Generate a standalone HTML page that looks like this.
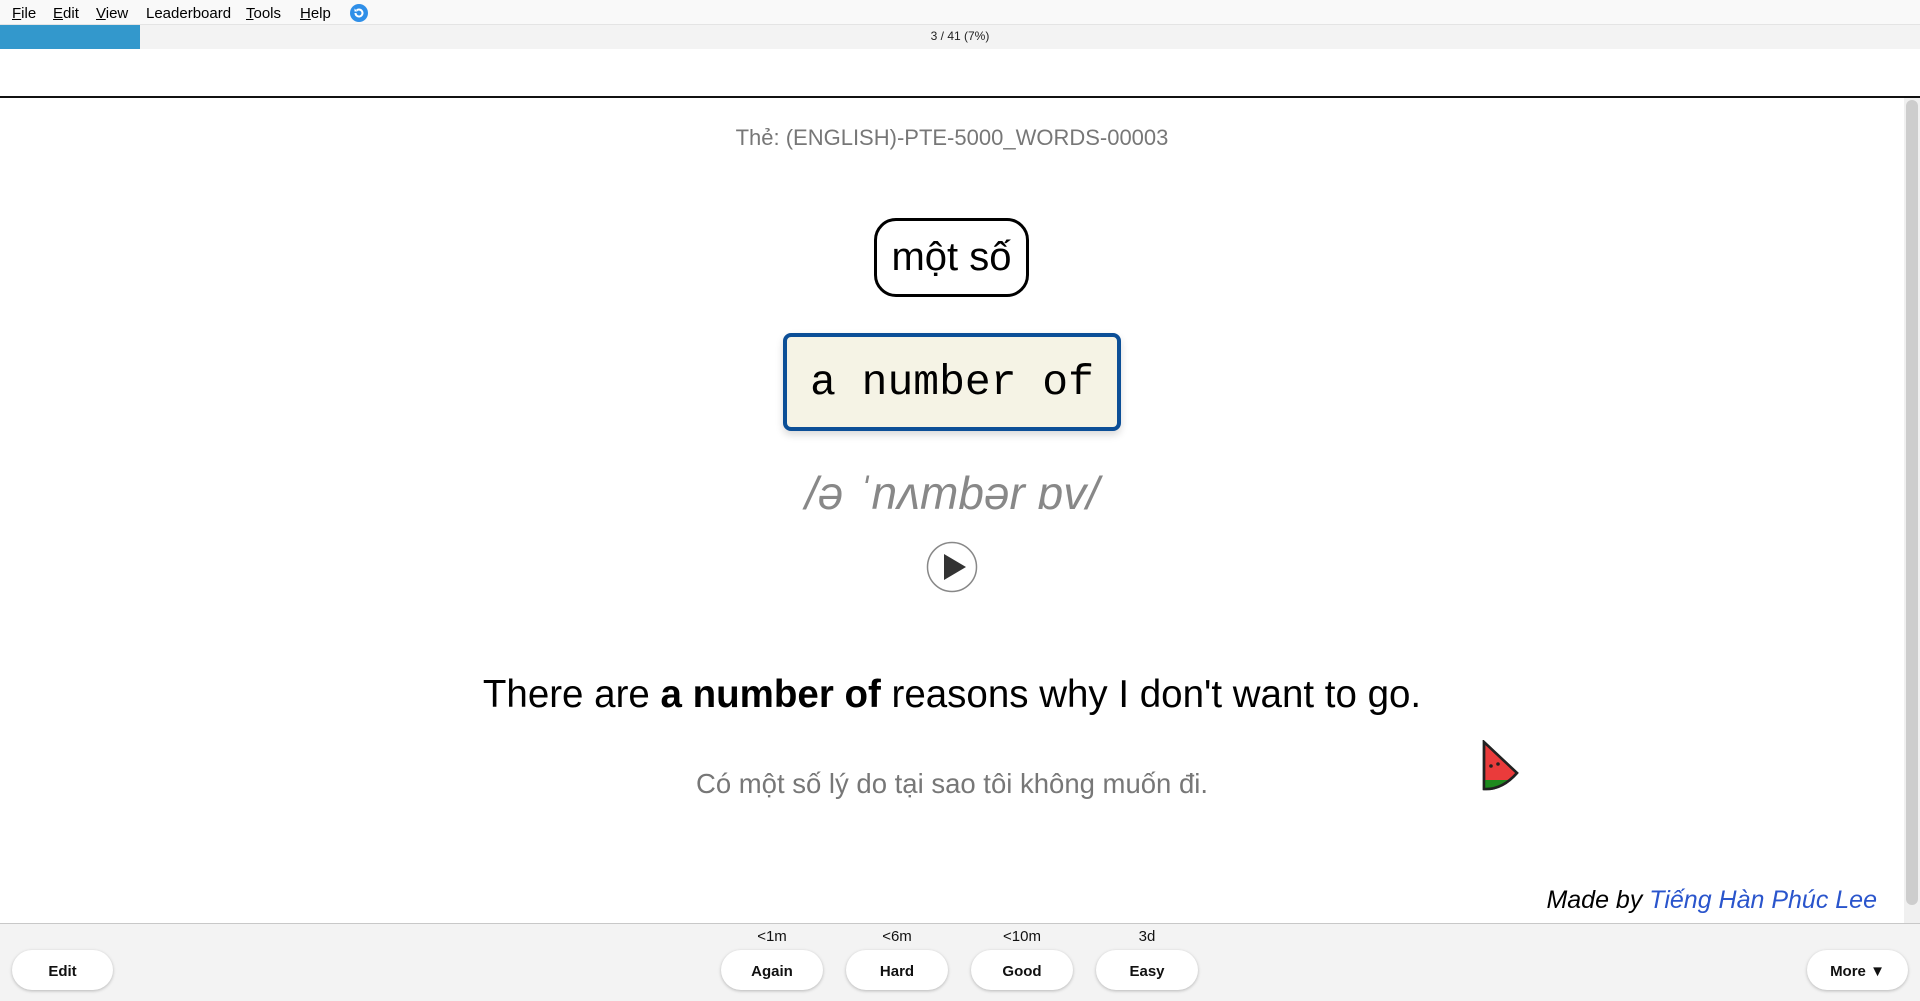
<!DOCTYPE html>
<html><head><meta charset="utf-8"><style>
*{margin:0;padding:0;box-sizing:border-box}
body{width:1920px;height:1001px;overflow:hidden;background:#fff;font-family:"Liberation Sans",Arial,sans-serif;position:relative}
.menu{position:absolute;top:0;left:0;width:1920px;height:24px;background:#f9f9f9;font-size:15px;color:#000}
.menu span{position:absolute;top:5px}
.menu u{text-decoration:underline}
.prog{position:absolute;top:24px;left:0;width:1920px;height:25px;background:#f3f3f3;border-top:1px solid #e4e4e4}
.prog .bar{position:absolute;left:0;top:0;width:140px;height:24px;background:#3398cc}
.prog .t{position:absolute;left:0;width:1920px;text-align:center;top:4px;font-size:12px;color:#222}
.line{position:absolute;top:96px;left:0;width:1920px;height:2px;background:#111}
.scroll{position:absolute;top:98px;left:1904px;width:16px;height:826px;background:#f0f0f0}
.scroll div{position:absolute;left:2px;top:2px;width:12px;height:805px;background:#cdcdcd;border-radius:6px}
.c{position:absolute;left:0;width:1904px;text-align:center}
.box1{position:absolute;left:874px;top:218px;width:155px;height:79px;border:3px solid #000;border-radius:22px;font-size:40px;text-align:center;line-height:72px}
.box2{position:absolute;left:783px;top:333px;width:338px;height:98px;border:4px solid #0c4f97;border-radius:8px;background:#f5f3e5;font-family:"Liberation Mono","Courier New",monospace;font-size:43px;text-align:center;line-height:92px;box-shadow:0 4px 8px rgba(0,0,0,.15)}
.btn{position:absolute;top:950px;height:40px;background:#fff;border-radius:20px;box-shadow:0 1px 3px rgba(0,0,0,.25);font-size:15px;text-align:center;line-height:43px;color:#111;font-weight:600}
.lab{position:absolute;top:928px;font-size:15px;text-align:center;color:#111}
</style></head><body>
<div class="menu">
<span style="left:12px"><u>F</u>ile</span>
<span style="left:53px"><u>E</u>dit</span>
<span style="left:96px"><u>V</u>iew</span>
<span style="left:146px">Leaderboard</span>
<span style="left:246px"><u>T</u>ools</span>
<span style="left:300px"><u>H</u>elp</span>
<svg style="position:absolute;left:350px;top:4px" width="18" height="18" viewBox="0 0 18 18"><circle cx="9" cy="9" r="9" fill="#2f8fe8"/><path d="M5.5 9a3.5 3.5 0 1 0 1.2-2.6" stroke="#fff" stroke-width="2" fill="none"/><path d="M4.5 4.5v3h3z" fill="#fff"/></svg>
</div>
<div class="prog"><div class="bar"></div><div class="t">3 / 41 (7%)</div></div>
<div class="line"></div>
<div class="scroll"><div></div></div>
<div class="c" style="top:125px;font-size:22px;color:#777">Thẻ: (ENGLISH)-PTE-5000_WORDS-00003</div>
<div class="box1">một số</div>
<div class="box2">a number of</div>
<div class="c" style="top:466px;font-size:46px;color:#888;font-style:italic">/ə ˈnʌmbər ɒv/</div>
<svg style="position:absolute;left:926px;top:541px" width="52" height="52" viewBox="0 0 52 52"><circle cx="26" cy="26" r="24.5" fill="#fff" stroke="#888" stroke-width="1.5"/><path d="M18 13L40 26L18 39Z" fill="#333"/></svg>
<div class="c" style="top:673px;font-size:38.5px;color:#000">There are <b>a number of</b> reasons why I don't want to go.</div>
<div class="c" style="top:768px;font-size:27.5px;color:#777">Có một số lý do tại sao tôi không muốn đi.</div>
<svg style="position:absolute;left:1482px;top:740px" width="38" height="52" viewBox="0 0 38 52"><path d="M2 2L35 33Q20 50 2 49Z" fill="#ea3b3b" stroke="#222" stroke-width="2.5"/><path d="M2 40L28 40Q18 50 2 49Z" fill="#1e8a1e"/><path d="M2 2L35 33Q20 50 2 49Z" fill="none" stroke="#222" stroke-width="2.5"/><circle cx="9" cy="26" r="1.8" fill="#222"/><circle cx="16" cy="24" r="1.8" fill="#222"/></svg>
<div style="position:absolute;right:43px;top:886px;font-size:25px;font-style:italic;color:#000">Made by <span style="color:#2a55cc">Tiếng Hàn Phúc Lee</span></div>
<div style="position:absolute;top:923px;left:0;width:1920px;height:78px;background:#f3f3f3;border-top:1px solid #c8c8c8"></div>
<div class="btn" style="left:12px;width:101px">Edit</div>
<div class="lab" style="left:721px;width:102px">&lt;1m</div>
<div class="lab" style="left:846px;width:102px">&lt;6m</div>
<div class="lab" style="left:971px;width:102px">&lt;10m</div>
<div class="lab" style="left:1096px;width:102px">3d</div>
<div class="btn" style="left:721px;width:102px">Again</div>
<div class="btn" style="left:846px;width:102px">Hard</div>
<div class="btn" style="left:971px;width:102px">Good</div>
<div class="btn" style="left:1096px;width:102px">Easy</div>
<div class="btn" style="left:1807px;width:101px">More ▼</div>
</body></html>
